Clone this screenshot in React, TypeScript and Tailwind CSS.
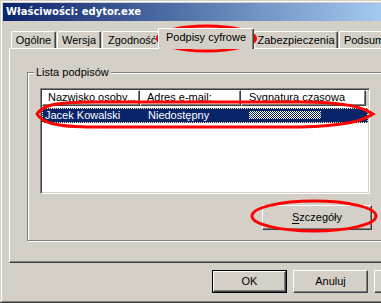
import React from "react";

const raised =
  "border-t border-l border-t-white border-l-white border-r border-b border-r-[#404040] border-b-[#404040] shadow-[inset_-1px_-1px_0_#808080]";

function Tab({ label, w, selected }: { label: string; w: string; selected?: boolean }) {
  if (selected) {
    return (
      <div
        className={`relative z-10 -mb-px flex-none h-[21px] ${w} bg-[#d4d0c8] border-t border-l border-white border-r border-r-[#404040] shadow-[inset_-1px_0_0_#808080] rounded-tl-[2px] rounded-tr-[2px] pt-[2px] text-center leading-[13px] whitespace-nowrap`}
      >
        {label}
      </div>
    );
  }
  return (
    <div
      className={`flex-none h-[17px] ${w} mr-px border-t border-l border-white border-r border-r-[#404040] shadow-[inset_-1px_0_0_#808080] rounded-tl-[2px] rounded-tr-[2px] pt-[2px] text-center leading-[13px] whitespace-nowrap overflow-hidden`}
    >
      {label}
    </div>
  );
}

function HeaderCell({ label, w, pl }: { label: string; w: string; pl: string }) {
  return (
    <div
      className={`flex-none h-[16px] ${w} ${pl} border-t border-l border-white border-r border-b border-r-[#404040] border-b-[#404040] shadow-[inset_-1px_-1px_0_#808080] leading-[13px] whitespace-nowrap overflow-hidden`}
    >
      {label}
    </div>
  );
}

export default function App() {
  return (
    <div className="relative w-[381px] h-[303px] overflow-hidden bg-[#d4d0c8] text-[11px] text-black font-['Liberation_Sans',Arial,sans-serif] border-b border-[#404040] pl-px pt-px">
      <div className="h-full border-l border-t border-white border-b border-b-[#808080] pl-px pt-px flex flex-col">
        {/* Title bar */}
        <div className="flex-none h-[18px] w-[400px] bg-[linear-gradient(to_right,#0a246a,#a6caf0_95%)] pl-[3px] text-white text-[10px] font-bold font-['DejaVu_Sans',Verdana,sans-serif] leading-[18px] whitespace-nowrap">
          Właściwości: edytor.exe
        </div>

        {/* Tabs */}
        <div className="flex-none mt-[7px] h-[20px] pl-[8px] flex items-end">
          <Tab label="Ogólne" w="w-[45px]" />
          <Tab label="Wersja" w="w-[44px]" />
          <div className="flex-none h-[17px] w-[56px] border-t border-l border-white rounded-tl-[2px] pt-[2px] pl-[5px] leading-[13px] whitespace-nowrap overflow-hidden">
            Zgodność
          </div>
          <Tab label="Podpisy cyfrowe" w="w-[96px]" selected />
          <Tab label="Zabezpieczenia" w="w-[84px]" />
          <Tab label="Podsumowanie" w="w-[85px]" />
        </div>

        {/* Tab panel */}
        <div className="flex-none ml-[6px] w-[400px] h-[215px] border-l border-t border-white border-b border-b-[#404040] shadow-[inset_0_-1px_0_#808080]">
          <div className="relative ml-[17px] mt-[23px] w-[400px] h-[169px] border border-[#808080] shadow-[inset_1px_1px_0_#fff,1px_1px_0_#fff]">
            <div className="absolute left-[6px] -top-[7px] px-[2px] bg-[#d4d0c8] leading-[13px] whitespace-nowrap">
              Lista podpisów
            </div>
            <div className="pl-[1px] pt-[1px] flex flex-col">
              {/* List view */}
              <div className="ml-[11px] mt-[14px] w-[330px] h-[106px] border-t border-l border-t-[#808080] border-l-[#808080] border-b border-r border-b-white border-r-white shadow-[inset_1px_1px_0_#404040,inset_-1px_-1px_0_#d4d0c8] p-[1px]">
                <div className="h-full bg-white flex flex-col">
                  <div className="flex flex-none">
                    <HeaderCell label="Nazwisko osoby..." w="w-[98px]" pl="pl-[5px]" />
                    <HeaderCell label="Adres e-mail:" w="w-[101px]" pl="pl-[6px]" />
                    <HeaderCell label="Sygnatura czasowa" w="w-[125px]" pl="pl-[7px]" />
                    <div className="flex-1 h-[16px] border-t border-white bg-[#d4d0c8]" />
                  </div>
                  <div className="mt-[2px] h-[15px] bg-[#0a246a] border border-dotted border-[#fff3b0] flex text-white leading-[13px] whitespace-nowrap">
                    <div className="flex-none w-[97px] pl-[2px]">Jacek Kowalski</div>
                    <div className="flex-none w-[101px] pl-[8px]">Niedostępny</div>
                    <div className="flex-none pl-[8px] pt-[2px]">
                      <div className="w-[72px] h-[8px] [background-image:repeating-conic-gradient(#ffffff_0%_25%,#0a246a_0%_50%)] [background-size:2px_2px]" />
                    </div>
                  </div>
                </div>
              </div>

              {/* Szczegóły button */}
              <div
                className={`ml-[233px] mt-[11px] w-[110px] h-[25px] ${raised} flex items-center justify-center leading-[13px]`}
              >
                <span>
                  <span className="underline underline-offset-[2px]">S</span>zczegóły
                </span>
              </div>
            </div>
          </div>
        </div>

        {/* Bottom buttons */}
        <div className="flex-none mt-[7px] ml-[209px] flex gap-[6px]">
          <div className="flex-none w-[75px] h-[23px] border border-black">
            <div className={`h-full ${raised} flex items-center justify-center leading-[13px]`}>OK</div>
          </div>
          <div className={`flex-none w-[75px] h-[23px] ${raised} flex items-center justify-center leading-[13px]`}>
            Anuluj
          </div>
          <div className={`flex-none w-[75px] h-[23px] ${raised}`} />
        </div>
      </div>

      {/* Red annotation marks */}
      <svg className="absolute inset-0 pointer-events-none" width="381" height="303" viewBox="0 0 381 303">
        <ellipse cx="206.5" cy="38.5" rx="49" ry="12.5" fill="none" stroke="#ff0000" strokeWidth="3" />
        <path
          d="M37,114 C42,106 52,102 95,102 L300,102 C345,102 362,107 373,114 C362,121 345,126 300,127 L95,127 C52,127 42,122 37,114 Z"
          fill="none"
          stroke="#ff0000"
          strokeWidth="3"
        />
        <ellipse cx="314" cy="216" rx="62" ry="15" fill="none" stroke="#ff0000" strokeWidth="3" />
      </svg>
    </div>
  );
}
